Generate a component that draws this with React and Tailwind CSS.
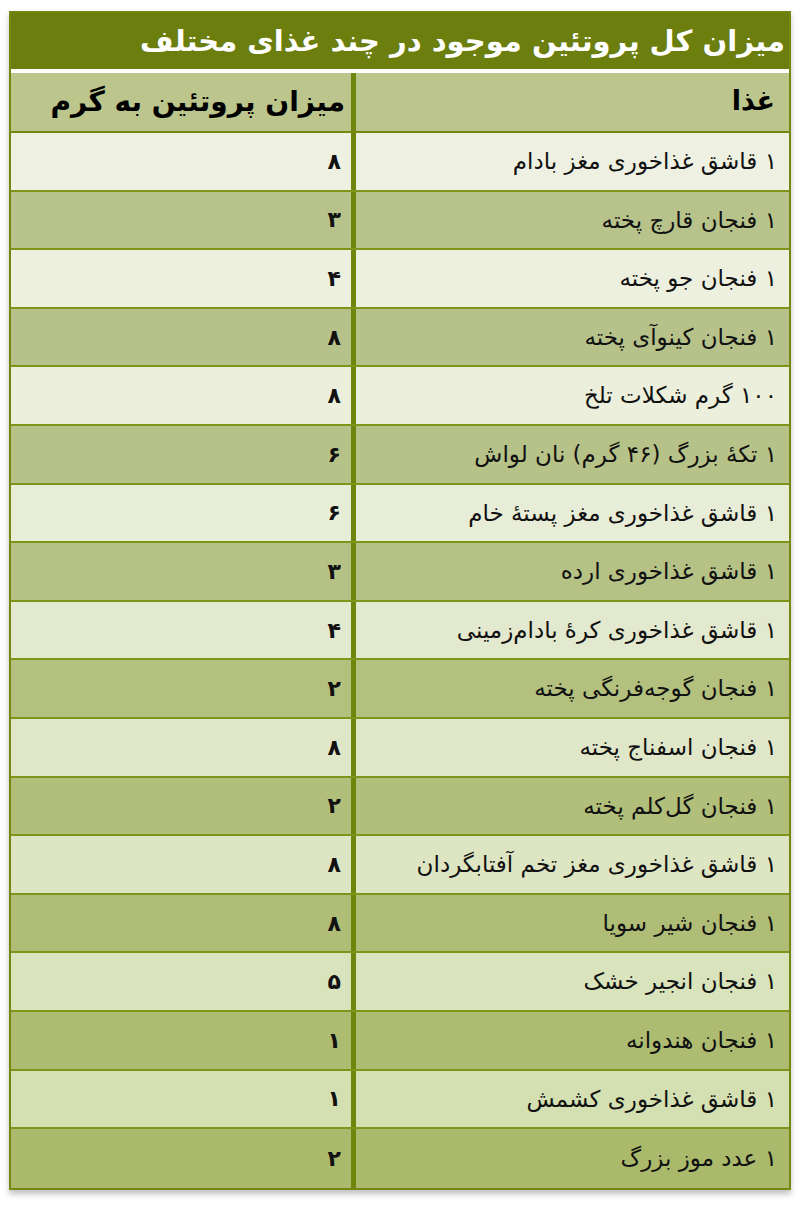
const rows = [
  ["۱ قاشق غذاخوری مغز بادام", "۸", "bg-[#eef1e2]"],
  ["۱ فنجان قارچ پخته", "۳", "bg-[#b8c38c]"],
  ["۱ فنجان جو پخته", "۴", "bg-[#edf0df]"],
  ["۱ فنجان کینوآی پخته", "۸", "bg-[#b7c28a]"],
  ["۱۰۰ گرم شکلات تلخ", "۸", "bg-[#ebefdc]"],
  ["۱ تکهٔ بزرگ (۴۶ گرم) نان لواش", "۶", "bg-[#b6c288]"],
  ["۱ قاشق غذاخوری مغز پستهٔ خام", "۶", "bg-[#e8edd8]"],
  ["۱ قاشق غذاخوری ارده", "۳", "bg-[#b5c185]"],
  ["۱ قاشق غذاخوری کرهٔ بادام‌زمینی", "۴", "bg-[#e3e9cf]"],
  ["۱ فنجان گوجه‌فرنگی پخته", "۲", "bg-[#b3c07e]"],
  ["۱ فنجان اسفناج پخته", "۸", "bg-[#e0e7c9]"],
  ["۱ فنجان گل‌کلم پخته", "۲", "bg-[#b1bf7a]"],
  ["۱ قاشق غذاخوری مغز تخم آفتابگردان", "۸", "bg-[#dde5c3]"],
  ["۱ فنجان شیر سویا", "۸", "bg-[#afbd76]"],
  ["۱ فنجان انجیر خشک", "۵", "bg-[#d9e3bc]"],
  ["۱ فنجان هندوانه", "۱", "bg-[#adbc71]"],
  ["۱ قاشق غذاخوری کشمش", "۱", "bg-[#d4e0b2]"],
  ["۱ عدد موز بزرگ", "۲", "bg-[#aab96b]"],
];

function App() {
  return (
    <div className="w-[800px] h-[1207px] bg-white pt-[11px] px-[9px]" style={{ fontFamily: '"DejaVu Sans", "Liberation Sans", sans-serif' }}>
      <div dir="rtl" className="w-[782px] border-2 border-[#74880f] bg-white shadow-[0_4px_6px_rgba(0,0,0,0.25)]">
        {/* Title */}
        <div className="h-[56px] bg-[#6b7e0e] flex items-center pr-[4px] text-white font-bold text-[29px] leading-none">
          میزان کل پروتئین موجود در چند غذای مختلف
        </div>
        <div className="h-[4px] bg-white" />

        {/* Header */}
        <div className="grid grid-cols-[438px_340px] h-[60px] bg-[#bbc58c] border-b-2 border-[#74880f]">
          <div className="border-l-[5px] border-[#6f860d] flex items-start pt-[8px] pr-[14px] font-bold text-[27px] text-black">
            غذا
          </div>
          <div className="flex items-start pt-[8px] pr-[6px] font-bold text-[28px] text-black">
            میزان پروتئین به گرم
          </div>
        </div>

        {/* Rows */}
        {rows.map(([food, grams, bg], i) => (
          <div
            key={i}
            className={`grid grid-cols-[438px_340px] h-[58.6px] ${bg} ${i < rows.length - 1 ? "border-b-2" : ""} border-[#7f9519]`}
          >
            <div className="border-l-[5px] border-[#6f860d] flex items-center pr-[12px] text-[23px] text-[#111]">
              {food}
            </div>
            <div className="flex items-center pr-[10px] font-bold text-[22px] text-[#111]">
              {grams}
            </div>
          </div>
        ))}
      </div>
    </div>
  );
}

export default App;
